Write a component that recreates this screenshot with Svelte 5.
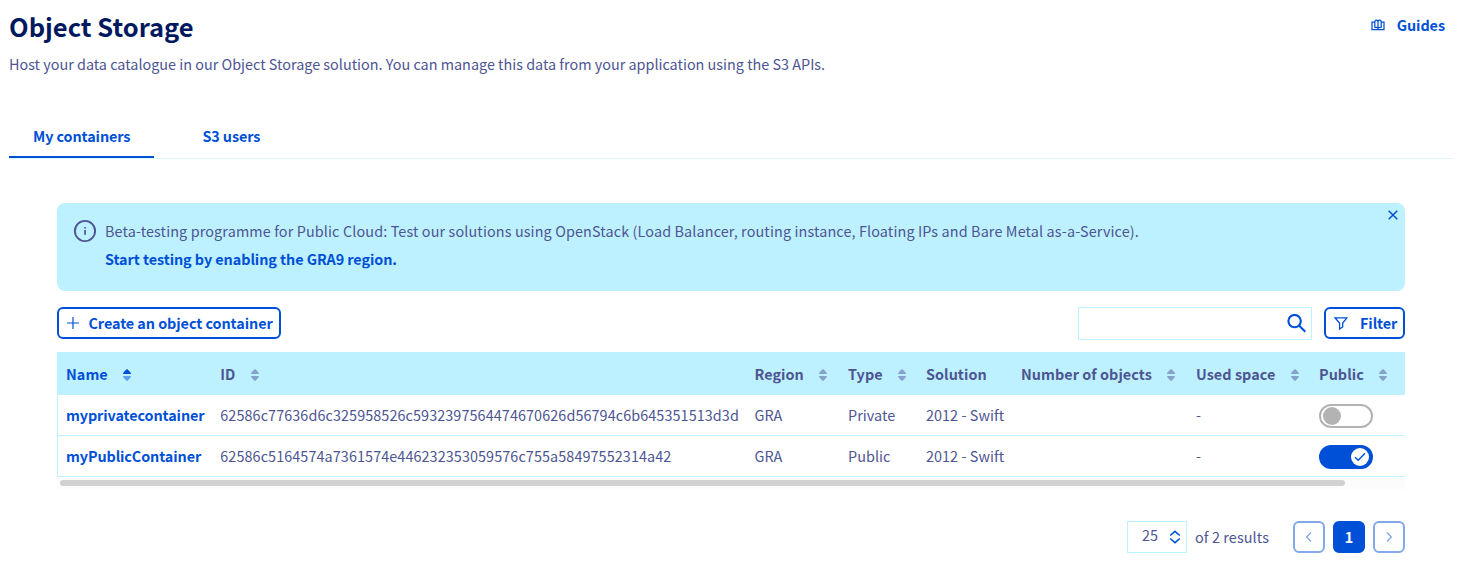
<script>
  const columns = [
    { label: 'Name', sort: 'asc' },
    { label: 'ID', sort: 'none' },
    { label: 'Region', sort: 'none' },
    { label: 'Type', sort: 'none' },
    { label: 'Solution' },
    { label: 'Number of objects', sort: 'none' },
    { label: 'Used space', sort: 'none' },
    { label: 'Public', sort: 'none' },
  ];
  let rows = $state([
    { name: 'myprivatecontainer', id: '62586c77636d6c325958526c5932397564474670626d56794c6b645351513d3d', region: 'GRA', type: 'Private', solution: '2012 - Swift', objects: '', used: '-', open: false },
    { name: 'myPublicContainer', id: '62586c5164574a7361574e446232353059576c755a58497552314a42', region: 'GRA', type: 'Public', solution: '2012 - Swift', objects: '', used: '-', open: true },
  ]);
</script>

<main>
  <header>
    <h1>Object Storage</h1>
    <a class="guides" href="#guides">
      <svg width="14" height="12" viewBox="0 0 14 12" fill="none" stroke="currentColor" stroke-width="1.25">
        <path d="M3.500 3H1v7.500h12V3h-2.500M3.800 8.800V2.300Q5.400 0 7 2.300Q8.600 0 10.200 2.300V8.800M7 2.300V9.500M3.800 8.800Q5.800 7.900 7 9.400Q8.200 7.900 10.200 8.800" />
      </svg>
      <span>Guides</span>
    </a>
  </header>
  <p class="intro">Host your data catalogue in our Object Storage solution. You can manage this data from your application using the S3 APIs.</p>

  <nav>
    <a class="active" href="#containers">My containers</a>
    <a href="#users">S3 users</a>
  </nav>

  <section>
    <div class="notice">
      <svg class="info" width="24" height="24" viewBox="0 0 24 24">
        <circle cx="12" cy="12" r="10.1" fill="none" stroke="currentColor" stroke-width="1.9" />
        <path d="M11.200 8h1.700v1.600h-1.700zM11.200 11h1.700v4.700h-1.700z" fill="currentColor" />
      </svg>
      <div class="message">
        <p>Beta-testing programme for Public Cloud: Test our solutions using OpenStack (Load Balancer, routing instance, Floating IPs and Bare Metal as-a-Service).</p>
        <a href="#gra9">Start testing by enabling the GRA9 region.</a>
      </div>
      <button class="close" aria-label="Close">
        <svg width="10" height="10" viewBox="0 0 10 10" fill="none" stroke="currentColor" stroke-width="1.5"><path d="M.7.7l8.6 8.6M9.3.7L.7 9.3" /></svg>
      </button>
    </div>

    <div class="toolbar">
      <button class="outline create">
        <svg width="12" height="12" viewBox="0 0 12 12" fill="none" stroke="currentColor" stroke-width="1.2"><path d="M6 0v12M0 6h12" /></svg>
        <span>Create an object container</span>
      </button>
      <div class="search">
        <svg width="20" height="20" viewBox="0 0 20 20" fill="none" stroke="currentColor" stroke-width="2.100"><circle cx="7.600" cy="7.100" r="6.200" /><path d="M12 11.500l6.300 6.200" /></svg>
      </div>
      <button class="outline filter">
        <svg width="14" height="13" viewBox="0 0 14 13" fill="none" stroke="currentColor" stroke-width="1.3"><path d="M1 .8h12L8.7 6.1v3.9L5.6 12V6.1z" /></svg>
        <span>Filter</span>
      </button>
    </div>

    <table>
      <colgroup>
        <col style:width="154.300px" /><col style:width="534.200px" /><col style:width="93.500px" /><col style:width="78px" />
        <col style:width="95px" /><col style:width="175px" /><col style:width="123px" /><col style:width="94px" />
      </colgroup>
      <thead>
        <tr>
          {#each columns as column}
            <th class:sorted={column.sort === 'asc'}>
              <div class="head">
                <span>{column.label}</span>
                {#if column.sort}
                  <svg width="8" height="12" viewBox="0 0 8 12" fill="currentColor">
                    <path d="M.6 5C-.1 5-.1 4.2.3 3.8L3.2.6Q4 0 4.8.6L7.7 3.8C8.1 4.2 8.1 5 7.4 5z" />
                    <path class="down" d="M.6 7C-.1 7-.1 7.8.3 8.2L3.2 11.4Q4 12 4.8 11.4L7.7 8.2C8.1 7.8 8.1 7 7.4 7z" />
                  </svg>
                {/if}
              </div>
            </th>
          {/each}
        </tr>
      </thead>
      <tbody>
        {#each rows as row}
          <tr>
            <td><a href="#container">{row.name}</a></td>
            <td class="id">{row.id}</td>
            <td>{row.region}</td>
            <td>{row.type}</td>
            <td>{row.solution}</td>
            <td>{row.objects}</td>
            <td>{row.used}</td>
            <td class="public">
              <button class="toggle" class:on={row.open} aria-label="Public" onclick={() => (row.open = !row.open)}>
                <span class="knob">
                  {#if row.open}
                    <svg width="12" height="10" viewBox="0 0 12 10" fill="none" stroke="currentColor" stroke-width="1.4"><path d="M1 5.2l3.2 3L11 1.2" /></svg>
                  {/if}
                </span>
              </button>
            </td>
          </tr>
        {/each}
      </tbody>
    </table>
    <div class="scroll"><div class="thumb"></div></div>

    <footer>
      <div class="select">
        <span>25</span>
        <svg width="12" height="14" viewBox="0 0 12 14" fill="none" stroke="currentColor" stroke-width="1.6"><path d="M1.200 5.5l4.800-4.100 4.800 4.100M1.200 8.5l4.800 4.100 4.800-4.100" /></svg>
      </div>
      <span class="total">of 2 results</span>
      <button class="page" aria-label="Previous"><svg width="6" height="10" viewBox="0 0 6 10" fill="none" stroke="currentColor" stroke-width="1.3"><path d="M5 .5L.7 5l4.300 4.5" /></svg></button>
      <button class="page current">1</button>
      <button class="page" aria-label="Next"><svg width="6" height="10" viewBox="0 0 6 10" fill="none" stroke="currentColor" stroke-width="1.3"><path d="M1 .5L5.300 5 1 9.5" /></svg></button>
    </footer>
  </section>
</main>

<style>
  :global(body) { background: #fff; }
  main {
    box-sizing: border-box; height: 569px; padding: 0 5px 0 9px; overflow: hidden;
    font-family: "Noto Sans CJK SC", "Noto Sans", sans-serif; font-size: 14.4px; line-height: 24px; color: #4d5592;
  }
  h1, p { margin: 0; }
  a { color: #0050d7; text-decoration: none; font-weight: 700; letter-spacing: -.1px; }
  svg { display: block; flex: none; }
  button { font: inherit; padding: 0; border: 0; background: none; color: #0050d7; }
  header { display: flex; justify-content: space-between; height: 52px; }
  h1 { font-size: 25.5px; line-height: 36px; padding-top: 8px; color: #00185e; }
  .guides { display: flex; align-items: center; gap: 12px; height: 24px; margin: 13px 8px 0 0; letter-spacing: -.05px; }
  .guides svg { margin-top: -1px; }
  nav { display: flex; margin-top: 38px; height: 44px; border-bottom: 1px solid #def8ff; }
  .intro { height: 24px; }
  nav a { box-sizing: border-box; height: 44px; padding: 10px 24px 0; margin-right: 24px; }
  nav a.active { border-bottom: 2px solid #0050d7; }
  section { margin: 44px 48px 0; }
  .notice { display: flex; box-sizing: border-box; height: 88px; padding: 16px; border-radius: 8px; background: #bef1ff; }
  .message { margin-left: 8px; flex: 1; white-space: nowrap; }
  .message p { letter-spacing: .12px; }
  .message a { display: block; margin-top: 4px; letter-spacing: -.07px; }
  .close { height: 10px; margin: -9px -9px 0 0; }
  .toolbar { display: flex; margin-top: 16px; height: 33px; }
  .outline { box-sizing: border-box; display: flex; align-items: center; height: 32px; border: 2px solid #0050d7; border-radius: 6px; font-weight: 700; letter-spacing: -.07px; white-space: nowrap; }
  .create { width: 224px; padding-left: 8px; gap: 9.500px; }
  .search { box-sizing: border-box; width: 234px; height: 33px; margin-left: auto; border: 1px solid #bef1ff; display: flex; justify-content: flex-end; padding: 6px 4px; color: #0050d7; }
  .filter { width: 81px; margin-left: 12px; padding-left: 8px; gap: 12px; }
  table { table-layout: fixed; width: 1348px; margin-top: 12px; border-collapse: separate; border-spacing: 0; border-left: 1px solid #bef1ff; }
  th { height: 43px; padding: 0 8px; background: #bef1ff; text-align: left; font-weight: 700; letter-spacing: .05px; }
  td { height: 40px; padding: 0 8px; border-bottom: 1px solid #bef1ff; white-space: nowrap; letter-spacing: .06px; }
  .id { letter-spacing: .085px; }
  .head { display: flex; align-items: center; gap: 15.400px; white-space: nowrap; }
  .head svg { color: #85a2cc; margin-top: 3px; }
  .sorted, .sorted .head svg { color: #0050d7; }
  .sorted .head { gap: 15px; }
  .sorted .down { opacity: .5; }
  .public { height: 39px; padding-top: 1px; }
  .toggle { box-sizing: border-box; display: flex; align-items: center; width: 54px; height: 24px; padding: 0 2px; border: 2px solid #b3b3b3; border-radius: 12px; }
  .knob { display: flex; align-items: center; justify-content: center; width: 18px; height: 18px; border-radius: 50%; background: #b3b3b3; }
  .on { justify-content: flex-end; border-color: #0050d7; background: #0050d7; }
  .on .knob { background: #fff; }
  .scroll { height: 12px; padding: 3px; box-sizing: border-box; background: #fcfcfc; }
  .thumb { width: 1285px; height: 6px; border-radius: 3px; background: #d1d1d1; }
  footer { display: flex; justify-content: flex-end; margin-top: 32px; height: 32px; }
  .select { box-sizing: border-box; display: flex; justify-content: space-between; width: 60px; height: 32px; border: 1px solid #bef1ff; padding: 1px 5px 0 14px; }
  .select svg { color: #0050d7; margin-top: 7px; }
  .total { width: 90px; margin: 4px 0 0 8px; white-space: nowrap; letter-spacing: .1px; }
  .page { box-sizing: border-box; width: 32px; height: 32px; display: flex; align-items: center; justify-content: center; border: 2px solid #80a8eb; border-radius: 6px; color: #80a8eb; margin-left: 8px; }
  .current { background: #0050d7; border-color: #0050d7; color: #fff; font-weight: 700; }
</style>
